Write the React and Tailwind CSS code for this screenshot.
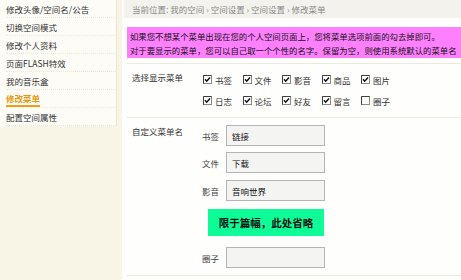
const menu = ["修改头像/空间名/公告", "切换空间模式", "修改个人资料", "页面FLASH特效", "我的音乐盒", "修改菜单", "配置空间属性"];

const rowOne = [
  ["书签", true],
  ["文件", true],
  ["影音", true],
  ["商品", true],
  ["图片", true],
];

const rowTwo = [
  ["日志", true],
  ["论坛", true],
  ["好友", true],
  ["留言", true],
  ["圈子", false],
];

function Check({ on }) {
  return (
    <svg width="9" height="9" viewBox="0 0 9 9" className="shrink-0">
      <rect x="0.5" y="0.5" width="8" height="8" fill="#fff" stroke="#8a8a8a" />
      <path d="M0.5 8.5V0.5H8.5" fill="none" stroke="#404040" />
      {on && <path d="M2 4.3L3.7 6.2L7 2.6" fill="none" stroke="#111" strokeWidth="1.5" />}
    </svg>
  );
}

function CheckRow({ items }) {
  return (
    <div className="flex h-[21px] items-center">
      {items.map(([name, on]) => (
        <label key={name} className="flex w-[39.5px] items-center gap-[3px]">
          <Check on={on} />
          <span>{name}</span>
        </label>
      ))}
    </div>
  );
}

function NameInput({ label, value, className = "" }) {
  return (
    <div className={"flex items-center " + className}>
      <span className="w-[24px] text-[#444]">{label}</span>
      <div className="flex h-[21px] w-[99px] items-center border border-[#b4b4b4] bg-[#f4f4f3] px-[5px] text-[#111]">
        {value}
      </div>
    </div>
  );
}

export default function App() {
  return (
    <div
      className="flex h-[280px] w-[461px] overflow-hidden bg-[#f8f5e6] text-[8.5px] leading-[14px] text-[#333]"
      style={{ fontFamily: '"Noto Sans CJK SC", "Noto Sans", sans-serif' }}
    >
      <aside className="h-[126px] w-[117px] shrink-0 border-r border-[#ebe6d2] bg-[#fdfcf7] pl-[6px]">
        {menu.map((item) => (
          <div key={item} className="flex h-[18px] items-center border-b border-dotted border-[#ece7d7]">
            <span
              className={
                item === "修改菜单"
                  ? "border-b-2 border-[#e9a21a] font-bold text-[#e39a12]"
                  : "text-[#333]"
              }
            >
              {item}
            </span>
          </div>
        ))}
      </aside>

      <main className="ml-[5px] flex-1 bg-[#fefefc] pl-[5px]">
        <div className="-ml-[3px] flex h-[18px] items-center bg-[#f4f2ec] pl-[8px] text-[#8a8a8a]">
          当前位置: 我的空间 › 空间设置 › 空间设置 › 修改菜单
        </div>

        <div className="mt-[9px] h-[31px] bg-[#ff80ff] px-[3px] pt-[2px] text-[8.4px] text-[#111]">
          <p className="whitespace-nowrap">如果您不想某个菜单出现在您的个人空间页面上，您将菜单选项前面的勾去掉即可。</p>
          <p className="whitespace-nowrap">对于要显示的菜单，您可以自己取一个个性的名字。保留为空，则使用系统默认的菜单名</p>
        </div>

        <section className="mt-[5px] flex h-[55px] border-y border-[#efe9dc] pl-[5px]">
          <div className="w-[71px] pt-[6px]">选择显示菜单</div>
          <div className="pt-[5px] text-[#333]">
            <CheckRow items={rowOne} />
            <CheckRow items={rowTwo} />
          </div>
        </section>

        <section className="flex h-[158px] border-b border-[#efe9dc] pl-[5px]">
          <div className="w-[70px] pt-[6px]">自定义菜单名</div>
          <div className="pt-[7px]">
            <NameInput label="书签" value="链接" />
            <NameInput label="文件" value="下载" className="mt-[6px]" />
            <NameInput label="影音" value="音响世界" className="mt-[7px]" />
            <div className="ml-[6px] mt-[8px] flex h-[27px] w-[116px] items-center justify-center bg-[#0dfc97] text-[10.5px] font-bold text-[#111]">
              限于篇幅，此处省略
            </div>
            <NameInput label="圈子" value="" className="mt-[11px]" />
          </div>
        </section>
      </main>
    </div>
  );
}
